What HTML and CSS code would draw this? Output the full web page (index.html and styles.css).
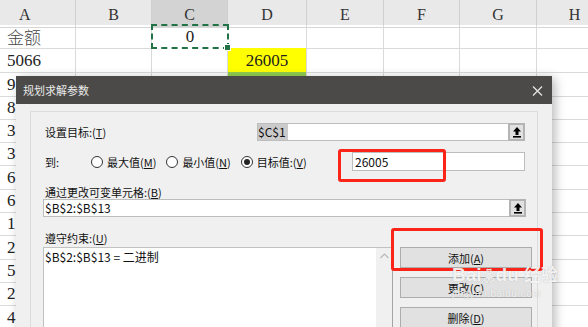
FILE: index.html
```html
<!DOCTYPE html>
<html lang="zh-CN">
<head>
  <meta charset="UTF-8" />
  <title>规划求解参数</title>
  <link rel="stylesheet" href="styles.css">
</head>
<body>
  <div class="sheet">
    <div class="row head">
      <div class="hc hc-a">A</div><div class="hc">B</div><div class="hc sel">C</div><div class="hc">D</div>
      <div class="hc">E</div><div class="hc">F</div><div class="hc">G</div><div class="hc">H</div>
    </div>
    <div class="row">
      <div class="cell txt cjk">金额</div><div class="cell"></div><div class="cell num marquee">0</div><div class="cell"></div>
      <div class="cell"></div><div class="cell"></div><div class="cell"></div><div class="cell"></div>
    </div>
    <div class="row">
      <div class="cell txt">5066</div><div class="cell"></div><div class="cell"></div><div class="cell num yellow">26005</div>
      <div class="cell"></div><div class="cell"></div><div class="cell"></div><div class="cell"></div>
    </div>
    <div class="row"><div class="cell txt">9</div><div class="cell"></div><div class="cell"></div><div class="cell green"></div><div class="cell"></div><div class="cell"></div><div class="cell"></div><div class="cell"></div></div>
    <div class="row"><div class="cell txt">8</div><div class="cell"></div><div class="cell"></div><div class="cell"></div><div class="cell"></div><div class="cell"></div><div class="cell"></div><div class="cell"></div></div>
    <div class="row"><div class="cell txt">3</div><div class="cell"></div><div class="cell"></div><div class="cell"></div><div class="cell"></div><div class="cell"></div><div class="cell"></div><div class="cell"></div></div>
    <div class="row"><div class="cell txt">3</div><div class="cell"></div><div class="cell"></div><div class="cell"></div><div class="cell"></div><div class="cell"></div><div class="cell"></div><div class="cell"></div></div>
    <div class="row"><div class="cell txt">6</div><div class="cell"></div><div class="cell"></div><div class="cell"></div><div class="cell"></div><div class="cell"></div><div class="cell"></div><div class="cell"></div></div>
    <div class="row"><div class="cell txt">6</div><div class="cell"></div><div class="cell"></div><div class="cell"></div><div class="cell"></div><div class="cell"></div><div class="cell"></div><div class="cell"></div></div>
    <div class="row"><div class="cell txt">1</div><div class="cell"></div><div class="cell"></div><div class="cell"></div><div class="cell"></div><div class="cell"></div><div class="cell"></div><div class="cell"></div></div>
    <div class="row"><div class="cell txt">2</div><div class="cell"></div><div class="cell"></div><div class="cell"></div><div class="cell"></div><div class="cell"></div><div class="cell"></div><div class="cell"></div></div>
    <div class="row"><div class="cell txt">5</div><div class="cell"></div><div class="cell"></div><div class="cell"></div><div class="cell"></div><div class="cell"></div><div class="cell"></div><div class="cell"></div></div>
    <div class="row"><div class="cell txt">2</div><div class="cell"></div><div class="cell"></div><div class="cell"></div><div class="cell"></div><div class="cell"></div><div class="cell"></div><div class="cell"></div></div>
    <div class="row"><div class="cell txt">4</div><div class="cell"></div><div class="cell"></div><div class="cell"></div><div class="cell"></div><div class="cell"></div><div class="cell"></div><div class="cell"></div></div>
  </div>

  <!-- Solver dialog window -->
  <div class="dialog">
    <div class="titlebar">
      <span>规划求解参数</span>
      <svg class="close" width="11" height="10" viewBox="0 0 11 10">
        <path d="M1 0.5 L10 9.5 M10 0.5 L1 9.5" stroke="#e4e4e4" stroke-width="1.3" fill="none"/>
      </svg>
    </div>
    <div class="dlg-body">
      <div class="group">
        <div class="f-row r1">
          <label>设置目标:(<u>T</u>)</label>
          <div class="ref target">
            <span class="ref-val"><span class="hl">$C$1</span></span>
            <span class="pick"><svg width="12" height="12" viewBox="0 0 12 12"><path d="M6 1 L10 5.5 L7.5 5.5 L7.5 9 L4.5 9 L4.5 5.5 L2 5.5 Z" fill="#000"/><rect x="2" y="10" width="8" height="1.6" fill="#000"/></svg></span>
          </div>
        </div>

        <div class="f-row r2">
          <label class="to">到:</label>
          <span class="opt"><span class="radio"></span><span>最大值(<u>M</u>)</span></span>
          <span class="opt"><span class="radio"></span><span>最小值(<u>N</u>)</span></span>
          <span class="opt"><span class="radio on"></span><span>目标值:(<u>V</u>)</span></span>
          <div class="value-box">26005</div>
        </div>

        <label class="cap c3">通过更改可变单元格:(<u>B</u>)</label>
        <div class="ref full">
          <span class="ref-val">$B$2:$B$13</span>
          <span class="pick"><svg width="12" height="12" viewBox="0 0 12 12"><path d="M6 1 L10 5.5 L7.5 5.5 L7.5 9 L4.5 9 L4.5 5.5 L2 5.5 Z" fill="#000"/><rect x="2" y="10" width="8" height="1.6" fill="#000"/></svg></span>
        </div>

        <label class="cap c4">遵守约束:(<u>U</u>)</label>
        <div class="cons">
          <div class="list">
            <div class="list-text">$B$2:$B$13 = 二进制</div>
            <div class="scroll">
              <svg width="9" height="6" viewBox="0 0 9 6"><path d="M0.5 5 L4.5 1 L8.5 5" stroke="#b8b8b8" stroke-width="1.2" fill="none"/></svg>
            </div>
          </div>
          <div class="btns">
            <button>添加(<u>A</u>)</button>
            <button>更改(<u>C</u>)</button>
            <button>删除(<u>D</u>)</button>
          </div>
        </div>
      </div>
    </div>
  </div>

  <!-- annotation marks -->
  <div class="mark mark-value"></div>
  <div class="mark mark-add"></div>

  <div class="watermark">
    <div class="wm-logo">Bai<span class="paw">❀</span>du <span class="wm-cn">经验</span></div>
    <div class="wm-url">jingyan.baidu.com</div>
  </div>
</body>
</html>
```

FILE: styles.css
```css
* { margin: 0; padding: 0; box-sizing: border-box; }

body {
  width: 588px;
  height: 327px;
  overflow: hidden;
  position: relative;
  background: #fff;
  font-family: "Noto Sans CJK SC", "Noto Sans", sans-serif;
}

/* spreadsheet */
.sheet {
  font-family: "Liberation Serif", "Noto Sans CJK SC", serif;
  color: #222;
}

.row {
  display: grid;
  grid-template-columns: 76px 76px 76px 79px 77px 76px 77px 76px;
  height: 23.3px;
}

.row.head {
  height: 25px;
  background: #e9e9e9;
}

.hc {
  border-right: 1px solid #cfcfcf;
  border-bottom: 1px solid #d6d6d6;
  font-size: 16px;
  line-height: 25px;
  padding-top: 2px;
  text-align: center;
  color: #333;
}

.hc-a {
  text-align: left;
  padding-left: 19px;
}

.hc.sel {
  background: #d3d3d3;
}

.cell {
  border-right: 1px solid #dadada;
  border-bottom: 1px solid #dadada;
  font-size: 17px;
  line-height: 22px;
  padding-top: 2px;
  white-space: nowrap;
}

.cell.txt {
  padding-left: 7px;
}

.cell.cjk {
  font-family: "Noto Sans CJK SC", sans-serif;
  font-weight: 300;
  line-height: 20px;
  color: #444;
}

.cell.num {
  text-align: center;
}

.cell.marquee {
  border: 2px dashed #217346;
  line-height: 20px;
  padding-top: 1px;
  position: relative;
  margin: -1px 0 0 -1px;
  width: 78px;
  height: 25px;
}

.cell.marquee::after {
  content: "";
  position: absolute;
  right: -4px;
  bottom: -4px;
  width: 5px;
  height: 5px;
  background: #217346;
  border: 1px solid #fff;
}

.cell.yellow {
  background: #ffff00;
}

.cell.green {
  background: #92d050;
}

/* dialog window */
.dialog {
  position: absolute;
  left: 16px;
  top: 76px;
  width: 536px;
  height: 270px;
  background: #f0f0f0;
  box-shadow: 3px 2px 10px rgba(0, 0, 0, 0.28);
  font-size: 11px;
  color: #111;
}

.titlebar {
  height: 28px;
  background: #4b4a48;
  color: #ececec;
  display: flex;
  align-items: center;
  justify-content: space-between;
  padding: 0 9px 0 7px;
  font-size: 11px;
}

.close {
  margin-top: 1px;
}

.dlg-body {
  padding: 7px 14px 0;
}

.group {
  border: 1px solid #dcdcdc;
  border-bottom: none;
  padding: 11px 12px 0 12px;
  height: 240px;
}

.f-row {
  display: flex;
  align-items: center;
}

label {
  margin-left: 2px;
  white-space: nowrap;
}

u {
  text-decoration: underline;
  text-underline-offset: 1px;
}

.r1 {
  height: 18px;
  justify-content: space-between;
}

.ref {
  display: flex;
  height: 18px;
  background: #fff;
  border: 1px solid #bdbdbd;
}

.ref.target {
  width: 268px;
}

.ref-val {
  flex: 1;
  font-size: 12px;
  line-height: 16px;
  padding-left: 1px;
  color: #111;
}

.hl {
  display: inline-block;
  background: #cbcbcb;
  padding: 0 2px 0 0;
  margin-left: -1px;
}

.pick {
  width: 17px;
  height: 18px;
  margin: -1px -1px 0 0;
  background: #e1e1e1;
  border: 2px solid #b4b4b4;
  display: flex;
  align-items: center;
  justify-content: center;
}

.r2 {
  height: 19px;
  margin-top: 11px;
}

.r2 .to {
  width: 46px;
}

.opt {
  display: flex;
  align-items: center;
  gap: 4px;
  margin-right: 10px;
  white-space: nowrap;
}

.radio {
  width: 12px;
  height: 12px;
  border: 1px solid #333;
  border-radius: 50%;
  background: #fff;
  display: flex;
  align-items: center;
  justify-content: center;
}

.radio.on::after {
  content: "";
  width: 6px;
  height: 6px;
  border-radius: 50%;
  background: #222;
}

.value-box {
  margin-left: auto;
  width: 173px;
  height: 19px;
  background: #fff;
  border: 1px solid #bdbdbd;
  font-size: 12px;
  line-height: 17px;
  padding-left: 2px;
}

.cap {
  display: block;
  line-height: 13px;
}

.cap.c3 { margin-top: 15px; }
.cap.c4 { margin-top: 15px; }

.ref.full {
  width: 483px;
}

.cons {
  display: flex;
  gap: 7px;
  margin-top: 2px;
  margin-right: -7px;
}

.list {
  width: 350px;
  height: 100px;
  background: #fff;
  border: 1px solid #c2c2c2;
  border-right: 1px solid #a4a4a4;
  display: flex;
}

.list-text {
  flex: 1;
  font-size: 12px;
  line-height: 16px;
  padding: 1px 0 0 1px;
}

.scroll {
  width: 16px;
  background: #f0f0f0;
  display: flex;
  justify-content: center;
  padding-top: 5px;
}

.btns {
  display: flex;
  flex-direction: column;
  gap: 9px;
}

button {
  width: 132px;
  height: 21px;
  background: #e1e1e1;
  border: 1px solid #adadad;
  font-family: "Noto Sans CJK SC", sans-serif;
  font-size: 11px;
  color: #111;
}

/* red annotation boxes */
.mark {
  position: absolute;
  border: 3px solid #fb2418;
  border-radius: 3px;
}

.mark-value {
  left: 338px;
  top: 149px;
  width: 108px;
  height: 33px;
}

.mark-add {
  left: 391px;
  top: 228px;
  width: 152px;
  height: 43px;
}

/* faint watermark */
.watermark {
  position: absolute;
  left: 452px;
  top: 262px;
  color: rgba(255, 255, 255, 0.85);
  text-shadow: 0 0 1px rgba(120, 120, 120, 0.5);
  font-family: "Liberation Sans", sans-serif;
}

.wm-logo {
  font-size: 19px;
  font-weight: bold;
  line-height: 24px;
  white-space: nowrap;
}

.paw {
  font-size: 14px;
}

.wm-cn {
  font-family: "Noto Sans CJK SC", sans-serif;
  font-size: 17px;
}

.wm-url {
  font-size: 10px;
  line-height: 12px;
  letter-spacing: 0.5px;
}
```
